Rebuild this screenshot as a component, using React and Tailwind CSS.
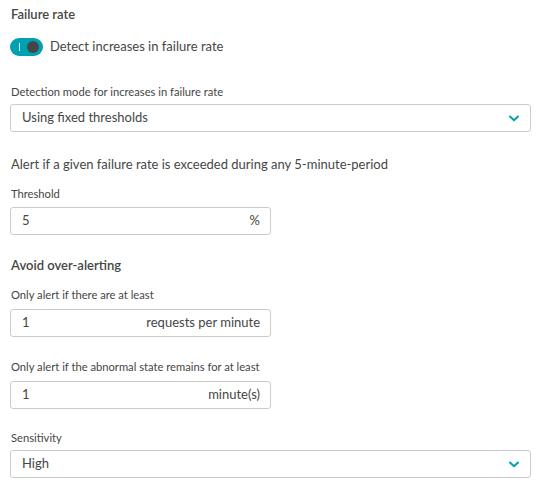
import React from "react";

function Chevron() {
  return (
    <svg width="10" height="7" viewBox="0 0 10 7" className="shrink-0">
      <path d="M1 1.5 L5 5.2 L9 1.5" fill="none" stroke="#00a1b2" strokeWidth="2" strokeLinecap="round" strokeLinejoin="round" />
    </svg>
  );
}

function Select({ value }) {
  return (
    <div className="mt-[4px] h-[28px] w-[521px] rounded-[3px] border border-[#cccccc] bg-white flex items-center justify-between pl-[11px] pr-[11px]">
      <span className="text-[13px] text-[#454646]">{value}</span>
      <Chevron />
    </div>
  );
}

function Input({ value, unit, className = "" }) {
  return (
    <div className={"h-[28px] w-[261px] rounded-[3px] border border-[#cccccc] bg-white flex items-center justify-between pl-[11px] pr-[10px] " + className}>
      <span className="text-[13px] text-[#454646]">{value}</span>
      <span className="text-[13px] text-[#454646]">{unit}</span>
    </div>
  );
}

function Label({ children, className = "" }) {
  return <div className={"h-[16px] leading-[16px] text-[11.2px] text-[#454646] " + className}>{children}</div>;
}

export default function App() {
  return (
    <div className="w-[542px] h-[490px] bg-white px-[10px] pt-[4px]" style={{ fontFamily: "Lato, 'Open Sans', sans-serif" }}>
      <div className="h-[20px] leading-[20px] text-[13px] font-semibold text-[#454646] pl-px">Failure rate</div>
      <div className="mt-[14px] h-[18px] flex items-center gap-[7px]">
        <div className="relative w-[33px] h-[18px] rounded-full bg-[#00a1b2]">
          <div className="absolute left-[9px] top-[5px] w-px h-[8px] bg-white" />
          <div className="absolute right-[4px] top-[3px] w-[12px] h-[12px] rounded-full bg-[#454646]" />
        </div>
        <span className="text-[13px] text-[#454646]">Detect increases in failure rate</span>
      </div>
      <Label className="mt-[28px] pl-px">Detection mode for increases in failure rate</Label>
      <Select value="Using fixed thresholds" />
      <div className="mt-[22px] h-[20px] leading-[20px] text-[13px] text-[#454646] pl-px">Alert if a given failure rate is exceeded during any 5-minute-period</div>
      <Label className="mt-[12px] pl-px">Threshold</Label>
      <Input value="5" unit="%" className="mt-[5px]" />
      <div className="mt-[20px] h-[20px] leading-[20px] text-[13px] font-semibold text-[#454646] pl-px">Avoid over-alerting</div>
      <Label className="mt-[12px] pl-px">Only alert if there are at least</Label>
      <Input value="1" unit="requests per minute" className="mt-[6px]" />
      <Label className="mt-[22px] pl-px">Only alert if the abnormal state remains for at least</Label>
      <Input value="1" unit="minute(s)" className="mt-[6px]" />
      <Label className="mt-[21px] pl-px">Sensitivity</Label>
      <Select value="High" />
    </div>
  );
}
